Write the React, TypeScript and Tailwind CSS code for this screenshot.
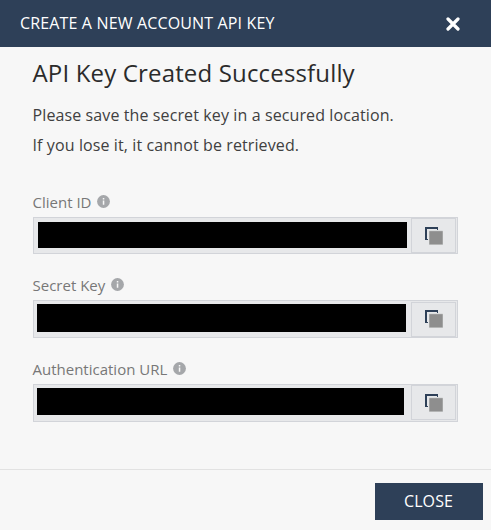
function Info() {
  return (
    <svg width="13" height="13" viewBox="0 0 13 13">
      <circle cx="6.5" cy="6.5" r="6.4" fill="#a5a7aa" />
      <path d="M5.8 3h1.5v1.5H5.8zM5.8 5.5h1.5v4.2H5.8z" fill="#f7f7f7" />
    </svg>
  );
}

function Copy({ className }: { className: string }) {
  return (
    <svg width="18" height="18" viewBox="0 0 18 18" className={className}>
      <path d="M0 0h13v3h-1V2H2v10h1v1H0z" fill="#2e4058" />
      <rect x="4" y="3.7" width="14" height="14" rx="0.5" fill="#b9babb" />
      <rect x="4.5" y="4.3" width="13" height="13" fill="#8e8e8e" />
    </svg>
  );
}

const fields = [
  { label: "Client ID", bar: "mt-1 ml-1 h-[26px] w-[369px]", box: "h-[37px]", button: "h-[35px]", icon: "" },
  { label: "Secret Key", bar: "mt-[3px] ml-[3px] h-[28px] w-[369px]", box: "h-[38px]", button: "mt-px h-[35px]", icon: "mb-[2px]" },
  { label: "Authentication URL", bar: "mt-[3px] ml-[3px] h-[27px] w-[367px]", box: "h-[38px]", button: "h-[35px]", icon: "" },
];

export default function App() {
  return (
    <div className="flex h-[530px] w-[491px] flex-col bg-[#f7f7f7] font-['Open_Sans',sans-serif] text-[#333]">
      <header className="flex h-[47px] shrink-0 items-center justify-between bg-[#2e4058] pl-5 pr-[31px] text-white">
        <h1 className="-mt-px text-[16px] tracking-[0.15px]">CREATE A NEW ACCOUNT API KEY</h1>
        <svg width="14" height="14" viewBox="0 0 14 14">
          <path d="M2 2l10 10M12 2L2 12" stroke="#fff" strokeWidth="3.2" strokeLinecap="round" />
        </svg>
      </header>
      <main className="flex h-[422px] shrink-0 flex-col px-[33px] pt-[9px]">
        <h2 className="-ml-[0.5px] text-2xl leading-[34px] tracking-[0.16px] text-[#2b2b2b]">API Key Created Successfully</h2>
        <p className="-ml-[0.5px] mt-[10px] text-[16px] leading-[30px] tracking-[0.11px] text-[#404040]">
          Please save the secret key in a secured location.
          <br />
          If you lose it, it cannot be retrieved.
        </p>
        <div className="mt-[29px] flex flex-col gap-[18px]">
          {fields.map((f) => (
            <div key={f.label}>
              <div className="-ml-[0.5px] flex h-[28px] items-center gap-[6px] pb-[4px] text-[15px] text-[#777]">
                <span className="pt-[2px]">{f.label}</span>
                <Info />
              </div>
              <div className={`flex w-[425px] items-start border border-[#d2d4d9] bg-[#e7e8ea] pr-px ${f.box}`}>
                <div className={`bg-black ${f.bar}`} />
                <button className={`ml-auto flex w-[45px] items-center justify-center border border-[#d2d4d9] bg-[#e7e8ea] ${f.button}`}>
                  <Copy className={f.icon} />
                </button>
              </div>
            </div>
          ))}
        </div>
      </main>
      <footer className="flex h-[61px] items-start justify-end border-t border-[#e2e2e2] pr-2 pt-[13px]">
        <button className="h-[37px] w-[108px] bg-[#2e4058] pb-[2px] pr-[1px] text-[16px] tracking-[0.1px] text-white">CLOSE</button>
      </footer>
    </div>
  );
}
